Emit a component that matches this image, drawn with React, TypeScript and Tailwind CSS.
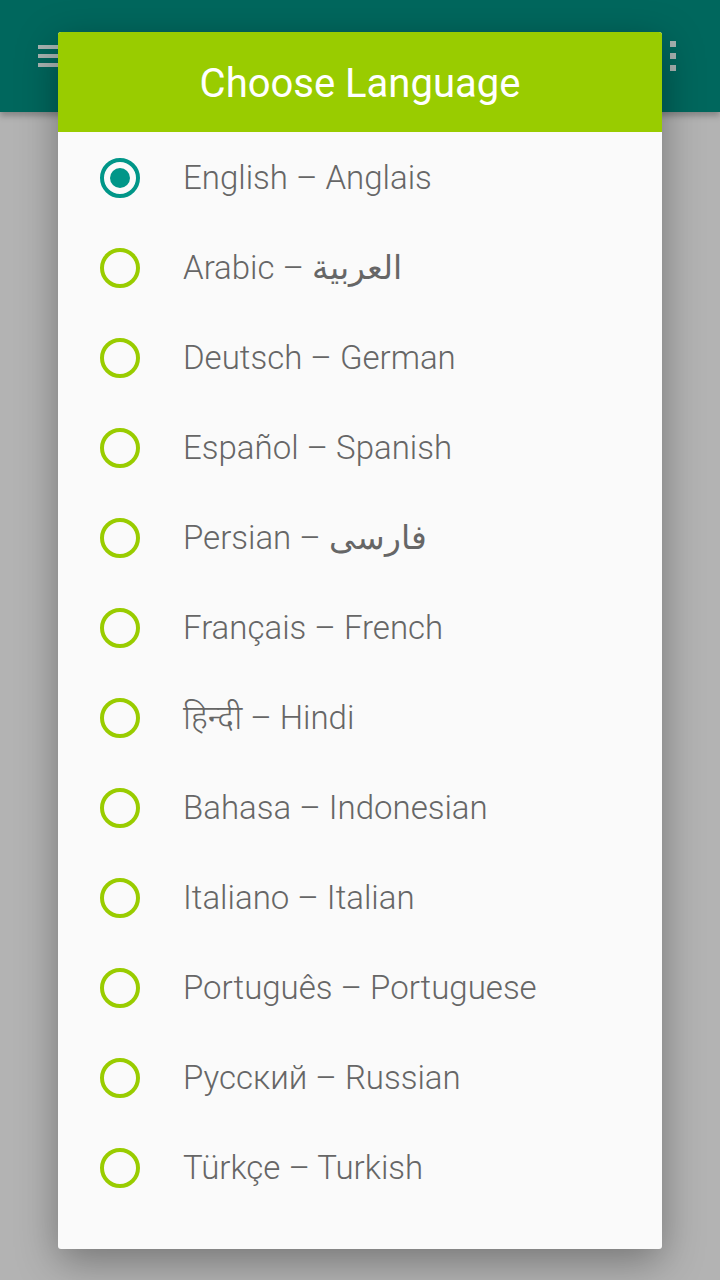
import React, { useState } from 'react';

const languages = [
  'English – Anglais',
  'Arabic – العربية',
  'Deutsch – German',
  'Español – Spanish',
  'Persian – فارسی',
  'Français – French',
  'हिन्दी – Hindi',
  'Bahasa – Indonesian',
  'Italiano – Italian',
  'Português – Portuguese',
  'Русский – Russian',
  'Türkçe – Turkish',
];

function Radio({ checked }: { checked: boolean }) {
  return (
    <span
      className={`flex h-[40px] w-[40px] shrink-0 items-center justify-center rounded-full border-[4px] ${
        checked ? 'border-[#009688]' : 'border-[#99cc00]'
      }`}
    >
      {checked && <span className="h-[20px] w-[20px] rounded-full bg-[#009688]" />}
    </span>
  );
}

export default function App() {
  const [selected, setSelected] = useState(0);

  return (
    <div className="relative h-[1280px] w-[720px] overflow-hidden bg-[#b3b3b3] font-['Roboto',sans-serif]">
      {/* app bar behind the scrim */}
      <div className="flex h-[112px] items-center justify-between bg-[#00675d] pl-[38px] pr-[44px] shadow-[0_4px_6px_rgba(0,0,0,0.25)]">
        <div className="flex flex-col gap-[5px]">
          <span className="h-[4px] w-[22px] bg-[#a9b4b2]" />
          <span className="h-[4px] w-[22px] bg-[#a9b4b2]" />
          <span className="h-[4px] w-[22px] bg-[#a9b4b2]" />
        </div>
        <div className="flex flex-col gap-[6px]">
          <span className="h-[6px] w-[6px] bg-[#a9b4b2]" />
          <span className="h-[6px] w-[6px] bg-[#a9b4b2]" />
          <span className="h-[6px] w-[6px] bg-[#a9b4b2]" />
        </div>
      </div>

      {/* dialog */}
      <div className="absolute left-[58px] top-[32px] w-[604px] overflow-hidden rounded-[3px] bg-[#fafafa] shadow-[0_12px_40px_rgba(0,0,0,0.35)]">
        <div className="flex h-[100px] items-center justify-center bg-[#99cc00] pt-[4px]">
          <h1 className="text-[40px] leading-none text-white">Choose Language</h1>
        </div>
        <ul className="pb-[36px] pt-[1px]">
          {languages.map((lang, i) => (
            <li
              key={lang}
              onClick={() => setSelected(i)}
              className="flex h-[90px] cursor-pointer items-center pl-[42px]"
            >
              <Radio checked={selected === i} />
              <span className="ml-[43px] font-['Roboto','Noto_Sans','DejaVu_Sans',sans-serif] text-[33px] font-light text-[#666666]">
                {lang}
              </span>
            </li>
          ))}
        </ul>
      </div>
    </div>
  );
}
